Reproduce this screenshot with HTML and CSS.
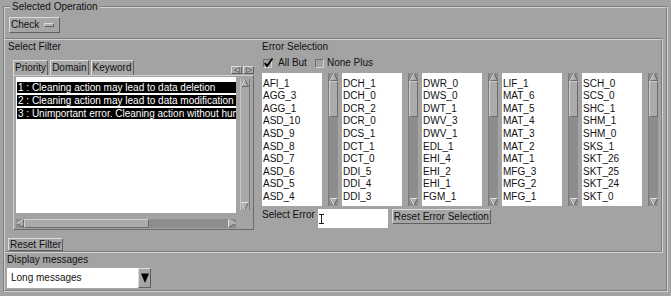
FILE: index.html
```html
<!DOCTYPE html>
<html>
<head>
<meta charset="utf-8">
<title>Selected Operation</title>
<link rel="stylesheet" href="styles.css">
</head>
<body>
<svg class="defs" width="0" height="0" aria-hidden="true">
  <defs>
    <symbol id="au" viewBox="0 0 8 8"><polygon points="4,0.5 7.5,7.5 0.5,7.5" fill="#acacac" stroke="#666" stroke-width="1"/><path d="M0.5 7.5 L4 0.5" stroke="#e2e2e2" stroke-width="1" fill="none"/></symbol>
    <symbol id="ad" viewBox="0 0 8 8"><polygon points="0.5,0.5 7.5,0.5 4,7.5" fill="#acacac" stroke="#666" stroke-width="1"/><path d="M0.5 0.5 L7.5 0.5 M0.5 0.5 L4 7.5" stroke="#e2e2e2" stroke-width="1" fill="none"/></symbol>
    <symbol id="al" viewBox="0 0 8 9"><polygon points="0.5,4.5 7.5,0.5 7.5,8.5" fill="#acacac" stroke="#666" stroke-width="1"/><path d="M0.5 4.5 L7.5 0.5" stroke="#e2e2e2" stroke-width="1" fill="none"/></symbol>
    <symbol id="ar" viewBox="0 0 8 9"><polygon points="0.5,0.5 7.5,4.5 0.5,8.5" fill="#acacac" stroke="#666" stroke-width="1"/><path d="M0.5 8.5 L0.5 0.5 L7.5 4.5" stroke="#e2e2e2" stroke-width="1" fill="none"/></symbol>
  </defs>
</svg>

<fieldset class="op">
  <legend class="op-legend">Selected Operation</legend>

  <div class="menubtn">Check<span class="menu-ind"></span></div>

  <div class="frame">
    <div class="filter">
      <div class="label">Select Filter</div>
      <div class="tabrow">
        <div class="tab active">Priority</div>
        <div class="tab">Domain</div>
        <div class="tab">Keyword</div>
        <div class="tabnav">
          <span class="navbtn"><svg width="6" height="6" viewBox="0 0 6 6"><polygon points="0.5,3 5.5,0.5 5.5,5.5" fill="#b4b4b4" stroke="#707070" stroke-width="1"/></svg></span>
          <span class="navbtn"><svg width="6" height="6" viewBox="0 0 6 6"><polygon points="0.5,0.5 5.5,3 0.5,5.5" fill="#b4b4b4" stroke="#707070" stroke-width="1"/></svg></span>
        </div>
      </div>
      <div class="page">
        <div class="page-main">
          <div class="listbox">
            <div class="item sel">1 : Cleaning action may lead to data deletion</div>
            <div class="item sel">2 : Cleaning action may lead to data modification</div>
            <div class="item sel">3 : Unimportant error. Cleaning action without human intervention</div>
          </div>
          <div class="hscroll">
            <svg class="harr" width="8" height="9"><use href="#al"/></svg>
            <div class="hthumb"></div>
            <div class="htrough"></div>
            <svg class="harr" width="8" height="9"><use href="#ar"/></svg>
          </div>
        </div>
        <div class="vscroll vscroll-filter">
          <svg class="varr" width="8" height="8"><use href="#au"/></svg>
          <div class="vthumb vthumb-full"></div>
          <svg class="varr" width="8" height="8"><use href="#ad"/></svg>
        </div>
      </div>
      <div class="btn btn-reset-filter">Reset Filter</div>
    </div>

    <div class="errsel">
      <div class="label">Error Selection</div>
      <div class="checks">
        <label class="chk chk-first">
          <svg width="12" height="10" viewBox="0 0 12 10"><path d="M0.5 9.5 V1.5 H8.5" stroke="#6a6a6a" fill="none"/><path d="M8.5 1.5 V9.5 H0.5" stroke="#d6d6d6" fill="none"/><path d="M1.8 5 L4 8 L9.5 0.5" stroke="#000" stroke-width="1.8" fill="none"/></svg>
          <span>All But</span>
        </label>
        <label class="chk chk-second">
          <svg width="9" height="10" viewBox="0 0 9 10"><path d="M0.5 9.5 V1.5 H8.5" stroke="#6a6a6a" fill="none"/><path d="M8.5 1.5 V9.5 H0.5" stroke="#d6d6d6" fill="none"/></svg>
          <span>None Plus</span>
        </label>
      </div>

      <div class="lists">
        <div class="lgroup">
          <div class="elist">
            <div>AFI_1</div><div>AGG_3</div><div>AGG_1</div><div>ASD_10</div><div>ASD_9</div><div>ASD_8</div><div>ASD_7</div><div>ASD_6</div><div>ASD_5</div><div>ASD_4</div>
          </div>
          <div class="vscroll">
            <svg class="varr" width="8" height="8"><use href="#au"/></svg>
            <div class="vthumb"></div>
            <div class="vtrough"></div>
            <svg class="varr" width="8" height="8"><use href="#ad"/></svg>
          </div>
        </div>
        <div class="lgroup">
          <div class="elist">
            <div>DCH_1</div><div>DCH_0</div><div>DCR_2</div><div>DCR_0</div><div>DCS_1</div><div>DCT_1</div><div>DCT_0</div><div>DDI_5</div><div>DDI_4</div><div>DDI_3</div>
          </div>
          <div class="vscroll">
            <svg class="varr" width="8" height="8"><use href="#au"/></svg>
            <div class="vthumb"></div>
            <div class="vtrough"></div>
            <svg class="varr" width="8" height="8"><use href="#ad"/></svg>
          </div>
        </div>
        <div class="lgroup">
          <div class="elist">
            <div>DWR_0</div><div>DWS_0</div><div>DWT_1</div><div>DWV_3</div><div>DWV_1</div><div>EDL_1</div><div>EHI_4</div><div>EHI_2</div><div>EHI_1</div><div>FGM_1</div>
          </div>
          <div class="vscroll">
            <svg class="varr" width="8" height="8"><use href="#au"/></svg>
            <div class="vthumb"></div>
            <div class="vtrough"></div>
            <svg class="varr" width="8" height="8"><use href="#ad"/></svg>
          </div>
        </div>
        <div class="lgroup">
          <div class="elist">
            <div>LIF_1</div><div>MAT_6</div><div>MAT_5</div><div>MAT_4</div><div>MAT_3</div><div>MAT_2</div><div>MAT_1</div><div>MFG_3</div><div>MFG_2</div><div>MFG_1</div>
          </div>
          <div class="vscroll">
            <svg class="varr" width="8" height="8"><use href="#au"/></svg>
            <div class="vthumb"></div>
            <div class="vtrough"></div>
            <svg class="varr" width="8" height="8"><use href="#ad"/></svg>
          </div>
        </div>
        <div class="lgroup">
          <div class="elist">
            <div>SCH_0</div><div>SCS_0</div><div>SHC_1</div><div>SHM_1</div><div>SHM_0</div><div>SKS_1</div><div>SKT_26</div><div>SKT_25</div><div>SKT_24</div><div>SKT_0</div>
          </div>
          <div class="vscroll">
            <svg class="varr" width="8" height="8"><use href="#au"/></svg>
            <div class="vthumb"></div>
            <div class="vtrough"></div>
            <svg class="varr" width="8" height="8"><use href="#ad"/></svg>
          </div>
        </div>
      </div>

      <div class="selrow">
        <span class="label">Select Error</span>
        <div class="entry"><svg class="ibeam" width="5" height="10" viewBox="0 0 5 10"><path d="M0 0.5 H5 M2.5 0.5 V9.5 M0 9.5 H5" stroke="#222" stroke-width="1" fill="none"/></svg></div>
        <div class="btn btn-reset-err">Reset Error Selection</div>
      </div>
    </div>
  </div>

  <div class="label dm">Display messages</div>
  <div class="combo">
    <div class="combo-val">Long messages</div>
    <div class="combo-btn"><svg width="8" height="10" viewBox="0 0 8 10"><polygon points="0,0.5 8,0.5 4,10" fill="#000"/></svg></div>
  </div>
</fieldset>
</body>
</html>
```

FILE: styles.css
```css
* { box-sizing: border-box; }

html, body {
  margin: 0;
  padding: 0;
}

body {
  width: 671px;
  height: 296px;
  overflow: hidden;
  background: #a3a3a3;
  color: #111;
  font-family: "Liberation Sans", Arial, sans-serif;
  font-size: 10px;
  line-height: 13px;
}

.defs { display: block; width: 0; height: 0; overflow: hidden; }

/* ---------- outer group ---------- */
.op {
  margin: 1px 3px 0 3px;
  padding: 4px 3px 2px 0;
  border: 2px groove #d2d2d2;
  min-width: 0;
}

.op-legend {
  margin-left: 5px;
  padding: 0 2px;
  line-height: 12px;
}

.label { line-height: 13px; white-space: nowrap; }

/* raised widgets */
.btn, .menubtn, .tab, .navbtn, .combo-btn {
  border: 1px solid;
  border-color: #dcdcdc #5f5f5f #5f5f5f #dcdcdc;
  background: #a6a6a6;
}

.menubtn {
  display: inline-flex;
  align-items: center;
  margin-left: 4px;
  height: 16px;
  line-height: 14px;
  padding: 0 5px 0 1px;
}

.menu-ind {
  display: block;
  width: 10px;
  height: 4px;
  margin-left: 5px;
  border: 1px solid;
  border-color: #dcdcdc #606060 #606060 #dcdcdc;
  background: #b0b0b0;
}

.btn {
  line-height: 11px;
  padding: 0 1px;
  white-space: nowrap;
}

/* ---------- main frame ---------- */
.frame {
  display: flex;
  margin-top: 5px;
  border: 2px groove #d2d2d2;
  border-left: none;
}

.filter {
  width: 249px;
  flex: none;
  display: flex;
  flex-direction: column;
  align-items: flex-start;
  padding-left: 3px;
}

.tabrow {
  display: flex;
  align-self: stretch;
  margin: 7px 0 0 5px;
  height: 15px;
}

.tab {
  border-bottom: none;
  line-height: 13px;
  padding: 0 1px;
  margin-right: 2px;
}

.tabnav {
  display: flex;
  margin-left: auto;
  align-self: flex-end;
  margin-bottom: 1px;
  gap: 1px;
}

.navbtn {
  display: flex;
  align-items: center;
  justify-content: center;
  width: 11px;
  height: 8px;
}

.page {
  display: flex;
  align-self: stretch;
  margin-left: 5px;
  height: 155px;
  padding: 1px 3px 1px 2px;
  border: 1px solid;
  border-color: #cfcfcf #6b6b6b #6b6b6b #cfcfcf;
}

.page-main {
  display: flex;
  flex-direction: column;
  width: 220px;
}

.listbox {
  height: 136px;
  background: #fff;
  padding: 5px 0 0 1px;
  overflow: hidden;
}

.item {
  line-height: 11px;
  margin-bottom: 2px;
  padding-left: 1px;
  white-space: nowrap;
  overflow: hidden;
}

.item.sel {
  background: #000;
  color: #fff;
}

.hscroll {
  display: flex;
  margin-top: 6px;
  height: 9px;
  background: #8d8d8d;
}

.harr { display: block; flex: none; }

.hthumb {
  width: 125px;
  border: 1px solid;
  border-color: #d0d0d0 #6a6a6a #6a6a6a #d0d0d0;
  background: #ababab;
}

.htrough { flex: 1; }

.vscroll {
  display: flex;
  flex-direction: column;
  align-items: center;
  width: 10px;
  height: 133px;
  background: #8d8d8d;
  border-left: 1px solid #7a7a7a;
}

.vscroll-filter {
  margin: 2px 0 0 4px;
  height: 131px;
  background: #a8a8a8;
  border-left: 1px solid #c8c8c8;
  border-right: 1px solid #7a7a7a;
}

.varr { display: block; flex: none; }

.vthumb {
  width: 9px;
  height: 36px;
  border: 1px solid;
  border-color: #d0d0d0 #6a6a6a #6a6a6a #d0d0d0;
  background: #ababab;
}

.vthumb-full { flex: 1; height: auto; width: 8px; border: none; background: transparent; }

.vtrough { flex: 1; }

.btn-reset-filter {
  margin-top: 8px;
  height: 13px;
}

/* ---------- error selection ---------- */
.errsel {
  flex: 1;
  display: flex;
  flex-direction: column;
  padding-left: 8px;
}

.checks {
  display: flex;
  align-items: center;
  margin-top: 3px;
  height: 13px;
}

.chk {
  display: flex;
  align-items: center;
}

.chk svg { display: block; }

.chk-first { margin-left: 1px; }
.chk-first svg { margin-right: 3px; }
.chk-second { margin-left: 8px; }
.chk-second svg { margin-right: 3px; }

.lists {
  display: flex;
  margin-top: 4px;
  gap: 4px;
}

.lgroup {
  display: flex;
  gap: 6px;
}

.elist {
  width: 60px;
  height: 133px;
  background: #fff;
  padding: 4.6px 0 0 1px;
  line-height: 12.6px;
  overflow: hidden;
  white-space: nowrap;
}

.selrow {
  display: flex;
  align-items: flex-start;
  margin-top: 2px;
}

.entry {
  width: 70px;
  height: 19px;
  margin: 1px 0 0 3px;
  background: #fff;
  padding: 5px 0 0 1px;
}

.ibeam { display: block; }

.btn-reset-err {
  margin: 1px 0 0 4px;
  line-height: 13px;
}

/* ---------- display messages ---------- */
.dm { padding-left: 2px; }

.combo {
  display: flex;
  width: 144px;
  height: 20px;
  margin: 2px 0 0 2px;
}

.combo-val {
  flex: 1;
  background: #fff;
  line-height: 20px;
  padding-left: 4px;
}

.combo-btn {
  width: 13px;
  display: flex;
  align-items: center;
  justify-content: center;
}
```
